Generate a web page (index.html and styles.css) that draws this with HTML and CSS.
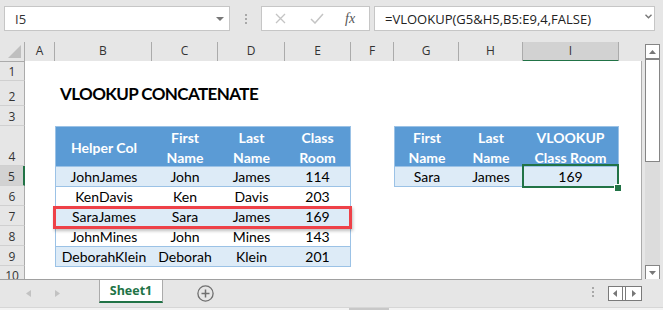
FILE: index.html
```html
<!DOCTYPE html>
<html>
<head>
<meta charset="utf-8">
<link rel="stylesheet" href="styles.css">
</head>
<body>
<div class="app">
  <div class="toolbar">
    <div class="namebox">
      <span>I5</span>
      <svg class="nb-caret" width="8" height="4" viewBox="0 0 8 4"><path d="M0 0H8L4 4Z" fill="#777"/></svg>
    </div>
    <div class="vdots"><i></i><i></i><i></i></div>
    <div class="fxbox">
      <svg class="ic-x" width="11" height="11" viewBox="0 0 11 11"><path d="M1 1L10 10M10 1L1 10" stroke="#C4C4C4" stroke-width="1.3"/></svg>
      <svg class="ic-ok" width="14" height="11" viewBox="0 0 14 11"><path d="M1 6L5 10L13 1" stroke="#C4C4C4" stroke-width="1.5" fill="none"/></svg>
      <span class="fx">fx</span>
    </div>
    <div class="formula">
      <span>=VLOOKUP(G5&amp;H5,B5:E9,4,FALSE)</span>
      <svg class="fm-chev" width="7" height="5" viewBox="0 0 7 5"><path d="M0.5 0.8L3.5 3.8L6.5 0.8" stroke="#777" stroke-width="1.4" fill="none"/></svg>
    </div>
  </div>

  <div class="main">
    <div class="sheet">
      <div class="colhdr">
        <div class="ch corner"><svg width="13" height="13" viewBox="0 0 13 13"><path d="M13 0V13H0Z" fill="#BFBFBF"/></svg></div>
        <div class="ch">A</div>
        <div class="ch">B</div>
        <div class="ch">C</div>
        <div class="ch">D</div>
        <div class="ch">E</div>
        <div class="ch">F</div>
        <div class="ch">G</div>
        <div class="ch">H</div>
        <div class="ch ch-active">I</div>
        <div class="ch ch-last"></div>
      </div>
      <div class="sbody">
        <div class="rowhdr">
          <div class="rh">1</div>
          <div class="rh rh-mid">2</div>
          <div class="rh">3</div>
          <div class="rh rh-tall">4</div>
          <div class="rh rh-active">5</div>
          <div class="rh">6</div>
          <div class="rh">7</div>
          <div class="rh">8</div>
          <div class="rh">9</div>
          <div class="rh rh-cut">10</div>
        </div>
        <div class="cells">
          <div class="title">VLOOKUP CONCATENATE</div>

          <div class="tbl tbl-left">
            <div class="tr th">
              <div>Helper Col</div>
              <div>First<br>Name</div>
              <div>Last<br>Name</div>
              <div>Class<br>Room</div>
            </div>
            <div class="tr td alt"><div>JohnJames</div><div>John</div><div>James</div><div>114</div></div>
            <div class="tr td"><div>KenDavis</div><div>Ken</div><div>Davis</div><div>203</div></div>
            <div class="tr td alt"><div>SaraJames</div><div>Sara</div><div>James</div><div>169</div></div>
            <div class="tr td"><div>JohnMines</div><div>John</div><div>Mines</div><div>143</div></div>
            <div class="tr td alt"><div>DeborahKlein</div><div>Deborah</div><div>Klein</div><div>201</div></div>
          </div>

          <div class="tbl tbl-right">
            <div class="tr th">
              <div>First<br>Name</div>
              <div>Last<br>Name</div>
              <div>VLOOKUP<br>Class Room</div>
            </div>
            <div class="tr td alt"><div>Sara</div><div>James</div><div>169</div></div>
          </div>
        </div>
      </div>
      <div class="redbox"></div>
      <div class="selbox"><span class="handle"></span></div>
    </div>

    <div class="vscroll">
      <div class="sb-btn"><svg width="7" height="4" viewBox="0 0 7 4"><path d="M0 4H7L3.5 0Z" fill="#777"/></svg></div>
      <div class="sb-thumb"></div>
      <div class="sb-track"></div>
      <div class="sb-btn"><svg width="7" height="4" viewBox="0 0 7 4"><path d="M0 0H7L3.5 4Z" fill="#777"/></svg></div>
    </div>
  </div>

  <div class="tabs">
    <svg class="nav-l" width="5" height="7" viewBox="0 0 5 7"><path d="M5 0V7L0 3.5Z" fill="#C2C2C2"/></svg>
    <svg class="nav-r" width="5" height="7" viewBox="0 0 5 7"><path d="M0 0V7L5 3.5Z" fill="#C2C2C2"/></svg>
    <div class="tab">Sheet1</div>
    <svg class="plus" width="17" height="17" viewBox="0 0 17 17"><circle cx="8.5" cy="8.5" r="7.6" fill="none" stroke="#6F6F6F" stroke-width="1.3"/><path d="M8.5 4.5V12.5M4.5 8.5H12.5" stroke="#6F6F6F" stroke-width="1.5"/></svg>
    <div class="hdots"><i></i><i></i><i></i></div>
    <svg class="hnav" width="34" height="15" viewBox="0 0 34 15">
      <rect x="0.5" y="0.5" width="33" height="14" fill="#fff" stroke="#7A7A7A"/>
      <path d="M9 4V11L5 7.5Z" fill="#777"/>
      <path d="M14.5 1V14M17.5 1V14" stroke="#7A7A7A" stroke-width="1"/>
      <path d="M24 4V11L28 7.5Z" fill="#777"/>
    </svg>
  </div>
  <div class="hstrip"><span class="hseg"></span></div>
</div>
</body>
</html>
```

FILE: styles.css
```css
* {
  box-sizing: border-box;
}

body {
  margin: 0;
  background: #E6E6E6;
  font-family: "Open Sans", "Noto Sans", sans-serif;
  color: #333;
  overflow: hidden;
}

.app {
  width: 663px;
  height: 310px;
  display: flex;
  flex-direction: column;
}

/* ---------- toolbar ---------- */
.toolbar {
  height: 42px;
  flex: none;
  display: flex;
  align-items: flex-start;
  padding: 6px 0 0 4px;
}

.namebox {
  width: 226px;
  height: 25px;
  background: #fff;
  border: 1px solid #C6C6C6;
  display: flex;
  align-items: center;
  padding-left: 10px;
  font-size: 13px;
  color: #333;
}

.nb-caret {
  margin-left: auto;
  margin-right: 5px;
}

.vdots {
  margin-left: 15px;
  margin-top: 8px;
  display: flex;
  flex-direction: column;
  gap: 2px;
}

.vdots i,
.hdots i {
  display: block;
  width: 2px;
  height: 2px;
  background: #A8A8A8;
}

.fxbox {
  margin-left: 14px;
  width: 109px;
  height: 25px;
  background: #fff;
  border: 1px solid #C6C6C6;
  display: flex;
  align-items: center;
  padding-left: 13px;
}

.ic-ok {
  margin-left: 24px;
}

.fx {
  margin-left: 21px;
  font-family: "Liberation Serif", serif;
  font-style: italic;
  font-size: 14px;
  color: #555;
}

.formula {
  margin-left: 4px;
  width: 281px;
  height: 25px;
  background: #fff;
  border: 1px solid #C6C6C6;
  display: flex;
  align-items: center;
  padding-left: 10px;
  font-size: 13px;
  color: #222;
}

.fm-chev {
  margin-left: auto;
  margin-right: 2px;
  margin-bottom: 4px;
}

/* ---------- main sheet ---------- */
.main {
  height: 237px;
  flex: none;
  display: flex;
}

.sheet {
  width: 642px;
  position: relative;
  display: flex;
  flex-direction: column;
}

.colhdr {
  height: 19px;
  display: grid;
  grid-template-columns: 25px 30px 97px 66px 67px 66px 43px 65px 64px 96px 23px;
}

.ch {
  border-right: 1px solid #ABABAB;
  border-bottom: 1px solid #ABABAB;
  text-align: center;
  font-size: 12px;
  line-height: 18px;
  color: #333;
}

.corner {
  display: flex;
  align-items: flex-end;
  justify-content: flex-end;
  padding: 0 3px 3px 0;
}

.ch-active {
  background: #D2D2D2;
  border-bottom: 2px solid #217346;
}

.ch-last {
  border-right: none;
}

.sbody {
  flex: 1;
  display: flex;
}

.rowhdr {
  width: 25px;
  display: flex;
  flex-direction: column;
}

.rh {
  height: 20px;
  border-right: 1px solid #ABABAB;
  border-bottom: 1px solid #D0D0D0;
  display: flex;
  align-items: flex-end;
  justify-content: center;
  font-size: 12px;
  line-height: 16px;
  color: #333;
}

.rh-mid {
  height: 25px;
}

.rh-tall {
  height: 40px;
}

.rh-active {
  background: #D2D2D2;
  border-right: 2px solid #217346;
}

.rh-cut {
  height: 13px;
  display: block;
  text-align: center;
  line-height: 20px;
  overflow: hidden;
  border-bottom: none;
}

.cells {
  flex: 1;
  display: grid;
  grid-template-columns: 30px 97px 66px 67px 66px 43px 65px 64px 96px 22px;
  grid-template-rows: 20px 25px 20px 40px 20px 20px 20px 20px 20px 13px;
  background: #fff;
  border-right: 1px solid #ABABAB;
}

.title {
  grid-column: 2 / 8;
  grid-row: 2;
  align-self: end;
  padding: 0 0 2px 5px;
  font-family: Lato, sans-serif;
  font-weight: bold;
  font-size: 17px;
  letter-spacing: -0.6px;
  line-height: 20px;
  color: #000;
  white-space: nowrap;
}

.tbl {
  border: 1px solid #9BC2E6;
  background: #fff;
  font-family: Lato, sans-serif;
  font-size: 14px;
  color: #000;
  align-self: start;
}

.tbl-left {
  grid-column: 2 / 6;
  grid-row: 4 / 10;
}

.tbl-right {
  grid-column: 7 / 10;
  grid-row: 4 / 6;
}

.tr {
  display: grid;
}

.tbl-left .tr {
  grid-template-columns: 96px 66px 67px 65px;
}

.tbl-right .tr {
  grid-template-columns: 64px 64px 95px;
}

.th {
  height: 39px;
  background: #5B9BD5;
  color: #fff;
  font-weight: bold;
}

.th > div {
  display: flex;
  align-items: center;
  justify-content: center;
  text-align: center;
  line-height: 20px;
  padding-top: 1px;
  white-space: nowrap;
}

.td {
  height: 20px;
  border-top: 1px solid #9BC2E6;
  line-height: 19px;
  text-align: center;
  white-space: nowrap;
}

.alt {
  background: #DDEBF7;
}

.redbox {
  position: absolute;
  left: 53px;
  top: 164px;
  width: 299px;
  height: 23px;
  border: 3px solid #EE4148;
  box-shadow: 1px 2px 3px rgba(0, 0, 0, 0.25);
}

.selbox {
  position: absolute;
  left: 522px;
  top: 122px;
  width: 97px;
  height: 24px;
  border: 2px solid #217346;
}

.handle {
  position: absolute;
  left: 90px;
  top: 18px;
  width: 8px;
  height: 8px;
  background: #217346;
  border: 1px solid #fff;
}

/* ---------- vertical scrollbar ---------- */
.vscroll {
  width: 15px;
  height: 236px;
  margin-left: 3px;
  margin-top: 2px;
  display: flex;
  flex-direction: column;
  background: #DCDCDC;
}

.sb-btn {
  height: 15px;
  flex: none;
  background: #fff;
  border: 1px solid #858585;
  display: flex;
  align-items: center;
  justify-content: center;
}

.sb-thumb {
  height: 103px;
  flex: none;
  background: #fff;
  border: 1px solid #858585;
}

.sb-track {
  flex: 1;
}

/* ---------- sheet tabs ---------- */
.tabs {
  height: 28px;
  flex: none;
  display: flex;
  align-items: flex-start;
  background: linear-gradient(#A0A0A0, #A0A0A0) 0 0 / 642px 1px no-repeat, #E6E6E6;
}

.nav-l {
  margin: 11px 0 0 26px;
}

.nav-r {
  margin: 11px 0 0 24px;
}

.tab {
  margin: 1px 0 0 39px;
  width: 64px;
  height: 23px;
  background: #fff;
  border-left: 1px solid #ABABAB;
  border-right: 1px solid #ABABAB;
  border-bottom: 2px solid #217346;
  text-align: center;
  font-weight: bold;
  font-size: 12.5px;
  line-height: 22px;
  color: #217346;
}

.plus {
  margin: 6px 0 0 34px;
}

.hdots {
  margin: 8px 14px 0 auto;
  display: flex;
  flex-direction: column;
  gap: 2px;
}

.hnav {
  margin: 7px 21px 0 0;
}

.hstrip {
  height: 3px;
  flex: none;
  background: #F3F3F3;
  border-top: 1px solid #D6D6D6;
  position: relative;
}

.hseg {
  position: absolute;
  left: 349px;
  top: 0;
  width: 40px;
  height: 2px;
  background: #C8C8C8;
}
```
